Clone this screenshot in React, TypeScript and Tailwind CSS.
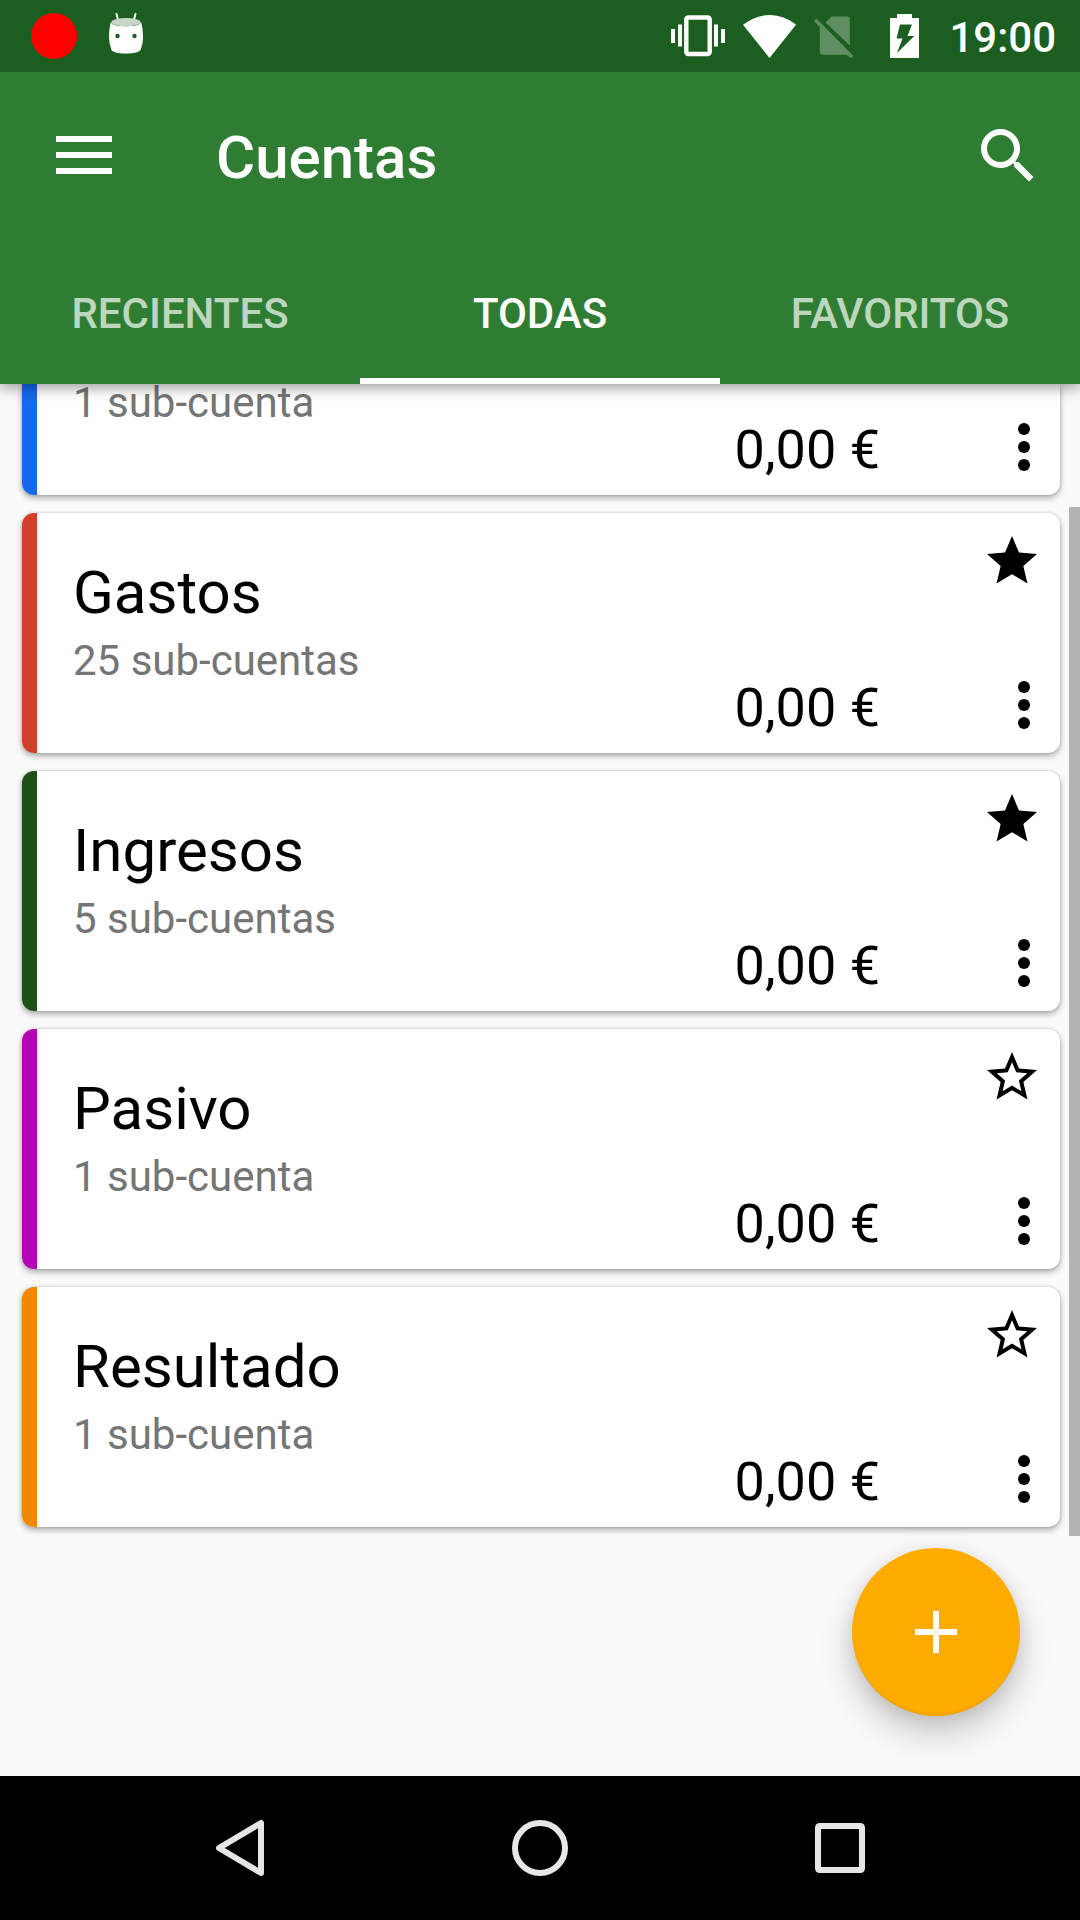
import React, { useState } from "react";

type Account = {
  id: string;
  name?: string;
  children: string;
  balance: string;
  stripe: string;
  favorite: boolean;
  clipped?: boolean;
};

const ACCOUNTS: Account[] = [
  { id: "a", children: "1 sub-cuenta", balance: "0,00 €", stripe: "bg-[#1569eb]", favorite: false, clipped: true },
  { id: "b", name: "Gastos", children: "25 sub-cuentas", balance: "0,00 €", stripe: "bg-[#d0402b]", favorite: true },
  { id: "c", name: "Ingresos", children: "5 sub-cuentas", balance: "0,00 €", stripe: "bg-[#1c5016]", favorite: true },
  { id: "d", name: "Pasivo", children: "1 sub-cuenta", balance: "0,00 €", stripe: "bg-[#b303b3]", favorite: false },
  { id: "e", name: "Resultado", children: "1 sub-cuenta", balance: "0,00 €", stripe: "bg-[#ef8900]", favorite: false },
];

const TABS = ["RECIENTES", "TODAS", "FAVORITOS"];

const STAR =
  "M12 17.27L18.18 21l-1.64-7.03L22 9.24l-7.19-.61L12 2 9.19 8.63 2 9.24l5.46 4.73L5.82 21z";
const STAR_OUTLINE =
  "M22 9.24l-7.19-.62L12 2 9.19 8.63 2 9.24l5.46 4.73L5.82 21 12 17.27 18.18 21l-1.63-7.03L22 9.24zM12 15.4l-3.76 2.27 1-4.28-3.32-2.88 4.38-.38L12 6.1l1.71 4.04 4.38.38-3.32 2.88 1 4.28L12 15.4z";

function StatusBar() {
  return (
    <div className="relative z-20 flex h-[72px] shrink-0 items-center justify-between bg-[#1b5e20] pl-[31px] pr-6 text-white">
      <div className="flex items-center gap-8">
        <span className="size-[46px] rounded-full bg-[#ff0000]" />
        <svg width="34" height="42" viewBox="0 0 34 42" className="mb-1.5">
          <path d="M7.5 2L9.5 9.5M26.5 2L24.5 9.5" stroke="#fff" strokeWidth="2" strokeLinecap="round" />
          <path
            d="M1.8 10Q3 14.3 17 14.3T32.2 10Q33.8 16 34 24T32 36.5Q31.5 41.5 17 41.5T2 36.5Q0 31 0 24T1.8 10z"
            fill="#fff"
          />
          <ellipse cx="17" cy="10.2" rx="14.6" ry="4.1" fill="#c6d6c7" />
          <circle cx="8.5" cy="24" r="2.2" fill="#1b5e20" />
          <circle cx="25.5" cy="24" r="2.2" fill="#1b5e20" />
        </svg>
      </div>
      <div className="flex items-center gap-[18px]">
        <svg width="54" height="42" viewBox="0 0 54 42" fill="#fff">
          <path d="M0 14h4v14H0zM7 9.5h4v22H7zM43 9.5h4v22h-4zM50 14h4v14h-4z" />
          <rect x="15.3" y="2.5" width="23.4" height="36.5" rx="2" fill="none" stroke="#fff" strokeWidth="4.4" />
        </svg>
        <svg width="53" height="43" viewBox="0 0 53 43" fill="#fff">
          <path d="M26.500 43L0 9.800C8 3.500 17 0 26.500 0S45 3.500 53 9.800z" />
        </svg>
        <svg width="40" height="42" viewBox="0 0 40 42" fill="#fff" fillOpacity=".3" className="mt-0.5">
          <path d="M11.600 6.500L17.500 .5H33q2.800 0 2.800 2.800V29.500z" />
          <path d="M2.300 2.500L0 4.900 5.800 11V36q0 2.800 2.800 2.800H32.500L37 42.200 39.300 39.800z" />
        </svg>
        <svg width="29" height="44" viewBox="0 0 29 44" className="ml-[18px]">
          <path fill="#fff" fillRule="evenodd" d="M7 0h15v4h7v40H0V4h7zM10 10.500L6.500 24.500H12.500L7 39 24.300 22H17.500L22 10.500z" />
        </svg>
        <time className="ml-3 pt-1 text-[42px] font-medium leading-[50px]">19:00</time>
      </div>
    </div>
  );
}

function AccountCard({ account }: { account: Account }) {
  const [favorite, setFavorite] = useState(account.favorite);
  const shape = account.clipped ? "h-[111px] rounded-b-xl" : "h-[240px] rounded-xl";
  const stripeShape = account.clipped ? "rounded-bl-xl" : "rounded-l-xl";
  return (
    <li className={`${shape} flex bg-white shadow-[0_3px_6px_rgba(0,0,0,0.32),0_0_3px_rgba(0,0,0,0.16)]`}>
      <span className={`w-[15px] shrink-0 ${stripeShape} ${account.stripe}`} />
      <div className="flex min-w-0 flex-1 flex-col justify-end pb-[73px] pl-9">
        {account.name && (
          <h2 className="mb-[13px] truncate text-[60px] leading-[72px] text-black">{account.name}</h2>
        )}
        <p className="text-[42px] leading-[38px] text-[#757575]">{account.children}</p>
      </div>
      <div className={`flex flex-col items-end pb-3 ${account.clipped ? "justify-end" : "justify-between pt-[18px]"}`}>
        {!account.clipped && (
          <button
            type="button"
            aria-label="Favorito"
            aria-pressed={favorite}
            onClick={() => setFavorite(!favorite)}
            className="mr-[18px] size-[60px]"
          >
            <svg viewBox="0 0 24 24" className="size-full fill-black">
              <path d={favorite ? STAR : STAR_OUTLINE} />
            </svg>
          </button>
        )}
        <div className="flex items-end gap-[108px]">
          <span className="text-[54px] leading-[66px] text-black">{account.balance}</span>
          <button type="button" aria-label="Más opciones" className="size-[72px]">
            <svg viewBox="0 0 24 24" className="size-full fill-black">
              <circle cx="12" cy="6" r="2" />
              <circle cx="12" cy="12" r="2" />
              <circle cx="12" cy="18" r="2" />
            </svg>
          </button>
        </div>
      </div>
    </li>
  );
}

export default function App() {
  const [tab, setTab] = useState(1);
  return (
    <div className="flex h-screen flex-col bg-[#fafafa] font-['Roboto',sans-serif]">
      <StatusBar />
      <header className="relative z-10 shrink-0 bg-[#2e7d32] text-white shadow-[0_3px_14px_rgba(0,0,0,0.42)]">
        <div className="flex h-[168px] items-center pl-14 pr-9">
          <button type="button" aria-label="Menú" className="mr-[104px] pb-0.5">
            <svg width="56" height="38" viewBox="0 0 56 38" className="block" fill="#fff">
              <path d="M0 0h56v6H0zM0 16h56v6H0zM0 32h56v6H0z" />
            </svg>
          </button>
          <h1 className="flex-1 pt-1 text-[60px] font-medium leading-[72px]">Cuentas</h1>
          <button type="button" aria-label="Buscar" className="size-[72px]">
            <svg viewBox="0 0 24 24" className="size-full fill-white">
              <path d="M15.500 14h-.79l-.28-.27A6.471 6.471 0 0 0 16 9.500 6.500 6.500 0 1 0 9.500 16c1.610 0 3.090-.59 4.230-1.570l.27.28v.79l5 4.990L20.490 19l-4.990-5zm-6 0C7.010 14 5 11.990 5 9.500S7.010 5 9.500 5 14 7.010 14 9.500 11.990 14 9.500 14z" />
            </svg>
          </button>
        </div>
        <div role="tablist" className="grid h-[144px] grid-cols-3">
          {TABS.map((label, i) => (
            <button
              key={label}
              type="button"
              role="tab"
              aria-selected={i === tab}
              onClick={() => setTab(i)}
              className={`border-b-6 pt-2.5 text-[42px] font-medium leading-[50px] ${
                i === tab ? "border-b-white text-white" : "border-b-transparent text-white/70"
              }`}
            >
              {label}
            </button>
          ))}
        </div>
      </header>
      <main className="relative min-h-0 flex-1">
        <ul className="flex flex-col gap-[18px] pl-[22px] pr-5">
          {ACCOUNTS.map((a) => (
            <AccountCard key={a.id} account={a} />
          ))}
        </ul>
        <span className="absolute right-0 top-[123px] h-[1029px] w-[11px] bg-[#b3b3b3]" />
        <button
          type="button"
          aria-label="Añadir cuenta"
          className="absolute bottom-[60px] right-[60px] flex size-[168px] items-center justify-center rounded-full bg-[#ffab00] shadow-[0_18px_36px_rgba(0,0,0,0.2),0_4px_18px_rgba(0,0,0,0.1),inset_0_-2px_2px_rgba(0,0,0,0.06)]"
        >
          <svg width="42" height="42" viewBox="0 0 42 42" fill="#fff">
            <path d="M18 0h6v18h18v6H24v18h-6V24H0v-6h18z" />
          </svg>
        </button>
      </main>
      <nav className="relative grid h-[144px] shrink-0 grid-cols-3 bg-black px-[90px]">
        <button type="button" aria-label="Atrás" className="flex items-center justify-center">
          <svg width="50" height="58" viewBox="0 0 50 58" fill="none" stroke="#e6e6e6" strokeWidth="6" strokeLinejoin="round">
            <path d="M46 4V54L4 29z" />
          </svg>
        </button>
        <button type="button" aria-label="Inicio" className="flex items-center justify-center">
          <svg width="56" height="56" viewBox="0 0 56 56" fill="none" stroke="#e6e6e6" strokeWidth="6">
            <circle cx="28" cy="28" r="25" />
          </svg>
        </button>
        <button type="button" aria-label="Recientes" className="flex items-center justify-center">
          <svg width="50" height="50" viewBox="0 0 50 50" fill="none" stroke="#e6e6e6" strokeWidth="6">
            <rect x="3" y="3" width="44" height="44" rx="1.500" />
          </svg>
        </button>
      </nav>
    </div>
  );
}
